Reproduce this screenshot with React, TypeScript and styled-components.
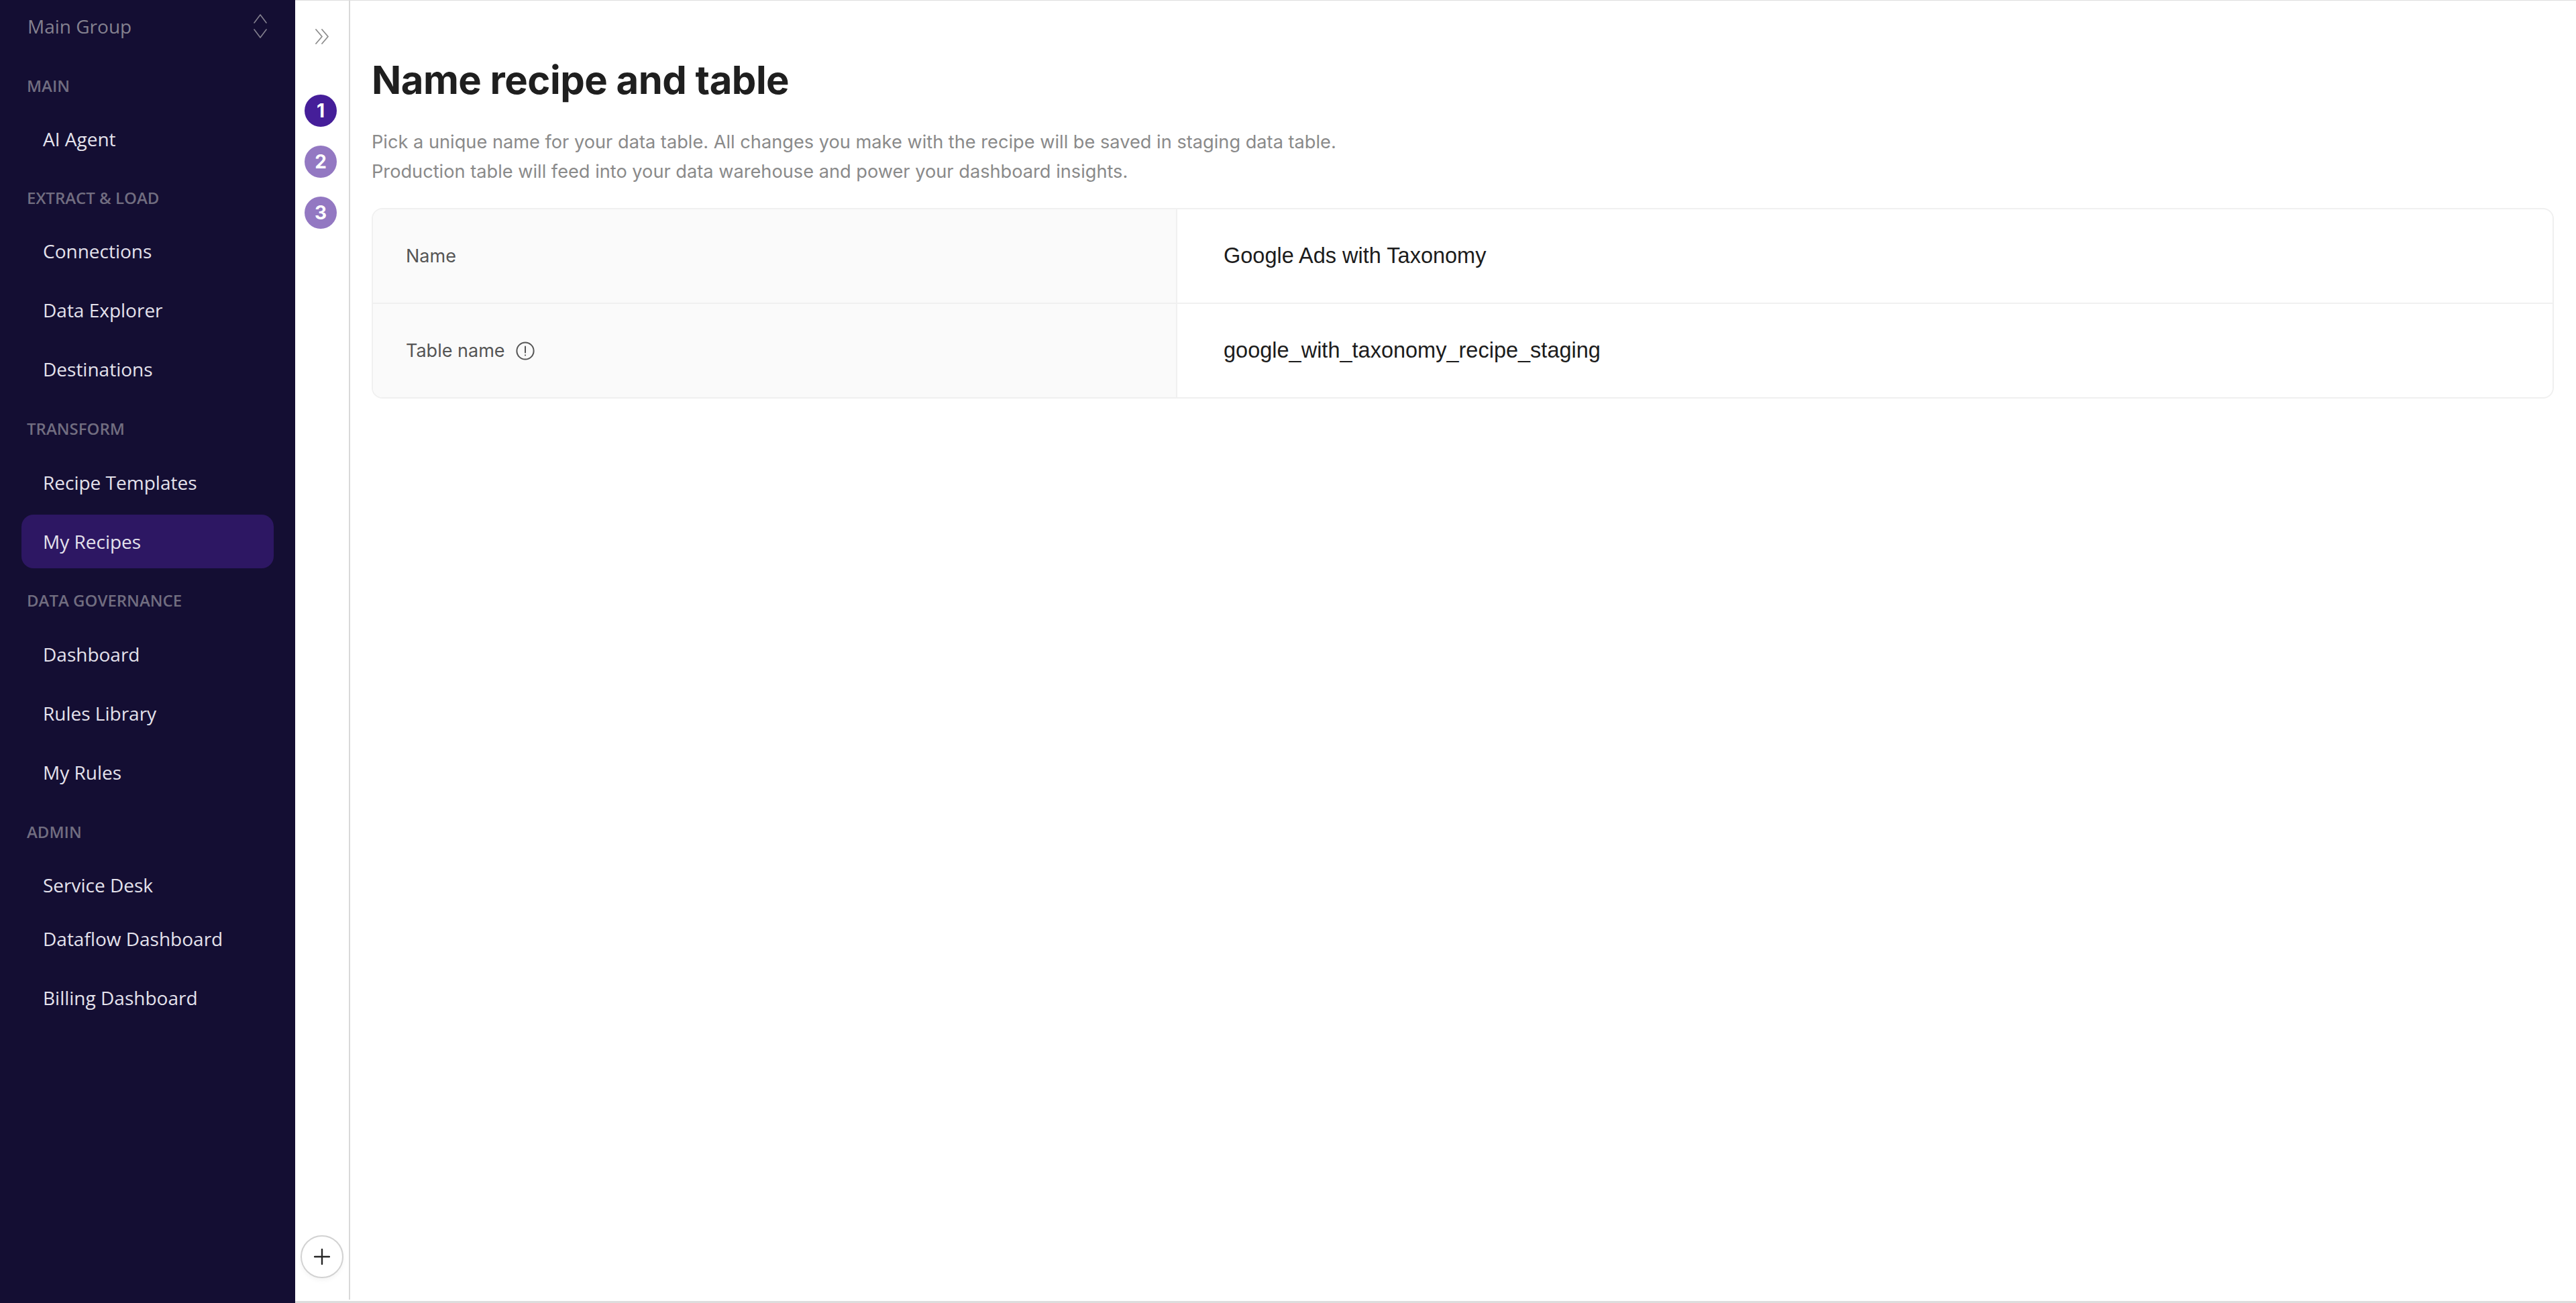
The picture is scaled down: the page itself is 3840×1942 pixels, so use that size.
import styled, { createGlobalStyle } from "styled-components";

const GlobalStyle = createGlobalStyle`
  html, body {
    margin: 0;
    padding: 0;
    background: #ffffff;
  }
  * {
    box-sizing: border-box;
  }
`;

const Page = styled.div`
  display: flex;
  width: 100%;
  height: 100vh;
  overflow: hidden;
`;

const Sidebar = styled.nav`
  width: 440px;
  flex-shrink: 0;
  padding: 0 32px;
  background: #140e33;
  font-family: "Open Sans", sans-serif;
`;

const GroupPicker = styled.div`
  display: flex;
  align-items: center;
  justify-content: space-between;
  height: 78px;
  padding: 0 10px 0 9px;
  color: #84818f;
  font-size: 28px;
`;

const SectionLabel = styled.div<{ $top: number }>`
  display: flex;
  align-items: center;
  height: 40px;
  margin-top: ${(p) => p.$top}px;
  padding-left: 8px;
  color: #716d80;
  font-size: 24px;
  font-weight: 600;
`;

const NavItem = styled.div<{ $active?: boolean; $top: number }>`
  display: flex;
  align-items: center;
  height: 80px;
  margin-top: ${(p) => p.$top}px;
  padding-left: 32px;
  border-radius: 18px;
  background: ${(p) => (p.$active ? "#2d1763" : "transparent")};
  color: #e4e2ec;
  font-size: 28px;
`;

const Workspace = styled.div`
  flex: 1;
  display: flex;
  min-width: 0;
  padding-bottom: 2px;
  border-top: 1px solid #dddddd;
  border-bottom: 3px solid #dddddd;
`;

const Rail = styled.aside`
  width: 82px;
  flex-shrink: 0;
  display: flex;
  flex-direction: column;
  align-items: center;
  padding: 42px 0 32px 0;
  border-right: 2px solid #d9d9d9;
`;

const Steps = styled.div`
  display: flex;
  flex-direction: column;
  gap: 28px;
  margin: 75px 4px 0 0;
`;

const Step = styled.div<{ $current?: boolean }>`
  display: flex;
  align-items: center;
  justify-content: center;
  width: 48px;
  height: 48px;
  border-radius: 50%;
  background: ${(p) => (p.$current ? "#451e99" : "#9378c2")};
  color: #ffffff;
  font-family: Inter, sans-serif;
  font-size: 28px;
  font-weight: 700;
`;

const AddButton = styled.div`
  display: flex;
  align-items: center;
  justify-content: center;
  width: 64px;
  height: 64px;
  margin-top: auto;
  border: 2px solid #d2d2d2;
  border-radius: 50%;
  box-shadow: 0 4px 6px rgba(0, 0, 0, 0.04);
`;

const Main = styled.main`
  flex: 1;
  min-width: 0;
  padding: 79px 33px 0 32px;
`;

const Title = styled.h1`
  margin: 0;
  color: #1f1f1f;
  font-family: Inter, sans-serif;
  font-size: 58px;
  font-weight: 700;
  letter-spacing: -0.5px;
  line-height: 78px;
`;

const Description = styled.p`
  margin: 32px 0 32px;
  color: #8a8a8a;
  font-family: Inter, sans-serif;
  font-size: 27.2px;
  line-height: 44px;
`;

const Card = styled.div`
  border: 2px solid #f0f0f0;
  border-radius: 16px;
  overflow: hidden;
`;

const Row = styled.div`
  display: grid;
  grid-template-columns: 1199px 1fr;
  height: 139px;

  & + & {
    height: 141px;
    border-top: 2px solid #f0f0f0;
  }
`;

const LabelCell = styled.div`
  display: flex;
  align-items: center;
  gap: 16px;
  padding-left: 49px;
  background: #fafafa;
  border-right: 2px solid #f0f0f0;
  color: #555555;
  font-family: Inter, sans-serif;
  font-size: 27px;
`;

const ValueCell = styled.div`
  display: flex;
  align-items: center;
  padding-left: 69px;
  color: #1c1c1c;
  font-family: "Liberation Sans", Arial, sans-serif;
  font-size: 32.5px;
`;

const Thin = styled.svg`
  display: block;
  fill: none;
  stroke-linecap: round;
  stroke-linejoin: round;
`;

const sections = [
  { label: "MAIN", top: 29, gap: 20, items: ["AI Agent"] },
  { label: "EXTRACT & LOAD", top: 27, gap: 20, items: ["Connections", "Data Explorer", "Destinations"] },
  { label: "TRANSFORM", top: 28, gap: 21, items: ["Recipe Templates", "My Recipes"] },
  { label: "DATA GOVERNANCE", top: 27, gap: 21, items: ["Dashboard", "Rules Library", "My Rules"] },
  { label: "ADMIN", top: 28, gap: 20, items: ["Service Desk", "Dataflow Dashboard", "Billing Dashboard"] },
];

function UpDownIcon() {
  return (
    <Thin width="20" height="36" viewBox="0 0 20 36" stroke="#84818f" strokeWidth="1.6">
      <path d="M1 13 10 1l9 12" />
      <path d="M1 23l9 12 9-12" />
    </Thin>
  );
}

function ExpandIcon() {
  return (
    <Thin width="20" height="23" viewBox="0 0 20 23" stroke="#8c8c8c" strokeWidth="1.8">
      <path d="M1 1l9 10.5L1 22" />
      <path d="M10 1l9 10.5L10 22" />
    </Thin>
  );
}

function PlusIcon() {
  return (
    <Thin width="24" height="24" viewBox="0 0 24 24" stroke="#262626" strokeWidth="2.4">
      <path d="M12 1v22M1 12h22" />
    </Thin>
  );
}

function InfoIcon() {
  return (
    <Thin width="28" height="28" viewBox="0 0 28 28" stroke="#555555" strokeWidth="2">
      <circle cx="14" cy="14" r="12.6" />
      <path d="M14 7.5v9M14 20.2v.4" />
    </Thin>
  );
}

export default function App() {
  return (
    <Page>
      <GlobalStyle />
      <Sidebar>
        <GroupPicker>
          <span>Main Group</span>
          <UpDownIcon />
        </GroupPicker>
        {sections.map((section) => (
          <div key={section.label}>
            <SectionLabel $top={section.top}>{section.label}</SectionLabel>
            {section.items.map((item, i) => (
              <NavItem
                key={item}
                $active={item === "My Recipes"}
                $top={i === 0 ? section.gap : item === "Dataflow Dashboard" ? 0 : 8}
              >
                {item}
              </NavItem>
            ))}
          </div>
        ))}
      </Sidebar>
      <Workspace>
        <Rail>
          <ExpandIcon />
          <Steps>
            <Step $current>1</Step>
            <Step>2</Step>
            <Step>3</Step>
          </Steps>
          <AddButton>
            <PlusIcon />
          </AddButton>
        </Rail>
        <Main>
          <Title>Name recipe and table</Title>
          <Description>
            Pick a unique name for your data table. All changes you make with the recipe will be saved in staging data table.
            <br />
            Production table will feed into your data warehouse and power your dashboard insights.
          </Description>
          <Card>
            <Row>
              <LabelCell>Name</LabelCell>
              <ValueCell>Google Ads with Taxonomy</ValueCell>
            </Row>
            <Row>
              <LabelCell>
                Table name
                <InfoIcon />
              </LabelCell>
              <ValueCell>google_with_taxonomy_recipe_staging</ValueCell>
            </Row>
          </Card>
        </Main>
      </Workspace>
    </Page>
  );
}
